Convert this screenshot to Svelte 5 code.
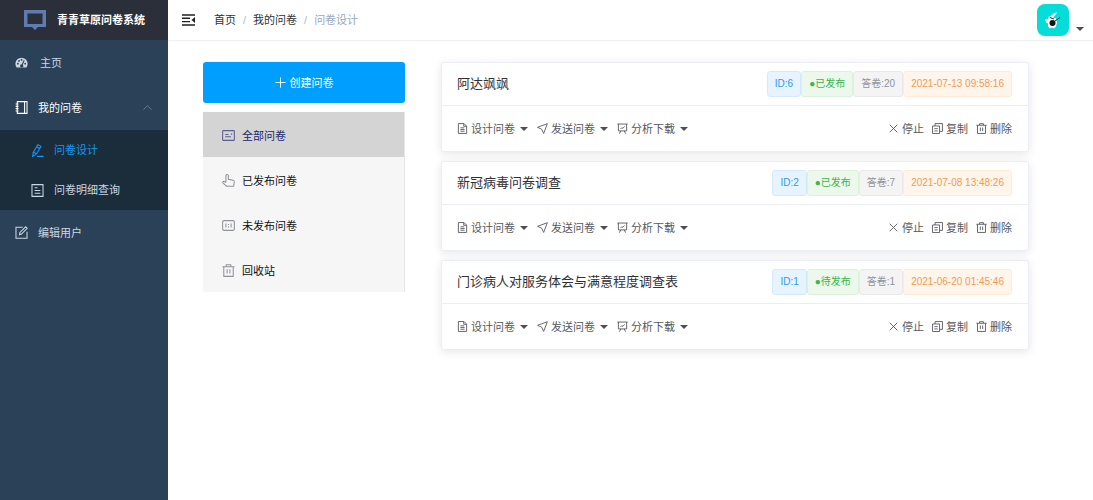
<script>
  let active = $state('all');
  let opened = $state(true);

  const filters = [
    { id: 'all', icon: 'card', label: '全部问卷' },
    { id: 'published', icon: 'pointer', label: '已发布问卷' },
    { id: 'draft', icon: 'ratio', label: '未发布问卷' },
    { id: 'trash', icon: 'trash', label: '回收站' }
  ];

  const surveys = [
    { id: 6, title: '阿达飒飒', status: '已发布', answers: 20, date: '2021-07-13 09:58:16' },
    { id: 2, title: '新冠病毒问卷调查', status: '已发布', answers: 7, date: '2021-07-08 13:48:26' },
    { id: 1, title: '门诊病人对服务体会与满意程度调查表', status: '待发布', answers: 1, date: '2021-06-20 01:45:46' }
  ];

  const menus = [
    { icon: 'document', label: '设计问卷' },
    { icon: 'send', label: '发送问卷' },
    { icon: 'board', label: '分析下载' }
  ];

  const actions = [
    { icon: 'close', label: '停止' },
    { icon: 'copy', label: '复制' },
    { icon: 'trash', label: '删除' }
  ];

  // stroked outlines on a 16x16 grid
  const icons = {
    notebook: 'M2.8 .8h12v14.400h-12zM11.800 .8v14.400M.8 3.800h3.500M.8 6.600h3.500M.8 9.400h3.500M.8 12.200h3.500',
    edit: 'M8.500 .8l3.800 2.100-5.600 9.300-4.700 3 .8-5.200zM7 3.300l3.700 2.200M2.900 9.700l3.800 2.400M7.500 15.200h8',
    list: 'M1.200 .8h13.600v14.400H1.200zM4.500 4.500h3.500M4.500 8h7M4.500 11.500h7',
    square: 'M9.500 1.500H1.200v13.500h13.600V7M5.500 10.800l.6-2.800 7-7 1.900 1.900-7 7z',
    card: 'M1.500 2h13q.7 0 .7.7v10.600q0 .7-.7.700h-13q-.7 0-.7-.7V2.700q0-.7.7-.7M4 6.800h4M4 9.600h7M11 6.300h1.500',
    pointer: 'M4.800 10V2.200a1.500 1.500 0 0 1 3 0V6.600l5.800 1.200q1.700.4 1.500 2l-.8 5.200H5.600L1 10.800q-.4-1.700 1.400-1.700l2.400 1.500',
    ratio: 'M2.500 2h11q1.700 0 1.700 1.500v9q0 1.500-1.700 1.500h-11Q.8 14 .8 12.500v-9Q.8 2 2.500 2zM4.800 5.500v5M11.200 5.500v5M8 6v1.500M8 9v1.500',
    trash: 'M.5 3.300h15M5.200 3.300v-2.300h5.600v2.300M2.200 3.300v11.900h11.600v-11.900M6.300 6.500v5.300M9.700 6.500v5.300',
    document: 'M2 .8h8.300l3.700 3.700V15.200H2zM9.800 1v3.800h4M5 7h5.500M5 9.500h6M5 12h6',
    send: 'M.8 6.300l14.200-5.300-5.300 14.200-2.900-6.200z',
    board: 'M.5 1.500h15M2 1.500v10h12v-10M5.500 11.500l-2 4M10.500 11.500l2 4M5 8.800l2-2 1.500 1L11 5',
    close: 'M2.500 2.500l11 11M13.500 2.500l-11 11',
    copy: 'M.8 4.300h10.200v11H.8zM4.500 4.300v-3.500h10.700v11.400H11M3.500 8.200h4.800M3.500 11.500h4.800',
    plus: 'M8 .5v15M.5 8h15',
    up: 'M.8 12L8 4.800l7.200 7.200'
  };
</script>

{#snippet icon(name)}
  <svg class="icon" viewBox="0 0 16 16" aria-hidden="true"><path d={icons[name]} /></svg>
{/snippet}

<div class="app">
  <aside>
    <div class="logo">
      <svg viewBox="0 0 22 20" aria-hidden="true">
        <path d="M0 0h22v17h-8l-3 3-3-3H0z" fill="#5f7bb0" />
        <path d="M3.500 3.500h15v10.500h-15z" fill="#2b2f3a" />
      </svg>
      <h1>青青草原问卷系统</h1>
    </div>
    <nav>
      <a class="item home" href="#home">
        <svg class="gauge" viewBox="0 0 16 16" aria-hidden="true">
          <path d="M2 14a7.500 7.500 0 1 1 12 0z" fill="currentColor" />
          <g fill="#2b4158">
            <circle cx="3.500" cy="9.500" r="1.100" />
            <circle cx="4.900" cy="6" r="1.100" />
            <circle cx="8" cy="4.600" r="1.100" />
            <circle cx="12.500" cy="9.500" r="1.100" />
            <path d="M10.700 5l1.200.5-2.300 5.200a2 2 0 1 1-1.200-.5z" />
          </g>
        </svg>
        主页
      </a>
      <button class="item current" aria-expanded={opened} onclick={() => (opened = !opened)}>
        {@render icon('notebook')}
        我的问卷
        <span class="arrow" class:closed={!opened}>{@render icon('up')}</span>
      </button>
      {#if opened}
        <div class="submenu">
          <a class="active" href="#design">{@render icon('edit')}问卷设计</a>
          <a href="#detail">{@render icon('list')}问卷明细查询</a>
        </div>
      {/if}
      <a class="item" href="#user">{@render icon('square')}编辑用户</a>
    </nav>
  </aside>

  <div class="page">
    <header>
      <button class="fold" aria-label="菜单">
        <svg viewBox="0 0 14 12" aria-hidden="true">
          <path d="M0 1h13M0 4.300h8M0 7.600h8M0 11h13" stroke="#222" stroke-width="1.400" />
          <path d="M13 3v6L9.500 6z" fill="#222" />
        </svg>
      </button>
      <div class="crumbs">
        <a href="#home">首页</a><i>/</i><a href="#mine">我的问卷</a><i>/</i><span>问卷设计</span>
      </div>
      <button class="user" aria-label="用户">
        <svg class="avatar" viewBox="0 0 32 32" aria-hidden="true">
          <rect width="32" height="32" rx="8" fill="#06dcd8" />
          <path d="M11 13l3-1 3-3 3-.5-2 3-2 2 3 1 1 4-1 4-2 2-2-1-2 1-2-2v-3l-2-1-1-3 3-.5z" fill="#fff" />
          <path d="M13 13.500l4 1.500M18 17l5-3.500" stroke="#143b40" />
          <circle cx="15.500" cy="19" r="3" fill="#101414" />
        </svg>
        <span class="caret"></span>
      </button>
    </header>

    <main>
      <section>
        <button class="create">{@render icon('plus')}创建问卷</button>
        <div class="filters">
          {#each filters as f}
            <button class:active={active === f.id} onclick={() => (active = f.id)}>
              {@render icon(f.icon)}{f.label}
            </button>
          {/each}
        </div>
      </section>

      <section class="cards">
        {#each surveys as survey (survey.id)}
          <article>
            <div class="top">
              <h2>{survey.title}</h2>
              <div class="tags">
                <span class="tag">ID:{survey.id}</span>
                <span class="tag success">●{survey.status}</span>
                <span class="tag info">答卷:{survey.answers}</span>
                <span class="tag warning">{survey.date}</span>
              </div>
            </div>
            <div class="bottom">
              {#each menus as menu}
                <button>{@render icon(menu.icon)}{menu.label}<span class="caret"></span></button>
              {/each}
              <div class="actions">
                {#each actions as action}
                  <button>{@render icon(action.icon)}{action.label}</button>
                {/each}
              </div>
            </div>
          </article>
        {/each}
      </section>
    </main>
  </div>
</div>

<style>
  :global(body) {
    background: #fff;
  }

  .app {
    display: flex;
    min-height: 100vh;
    font: 11px/16px "Liberation Sans", "Noto Sans CJK SC", sans-serif;
    color: #303133;
  }

  button {
    border: 0;
    padding: 0;
    background: none;
    font: inherit;
    color: inherit;
    cursor: pointer;
  }
  a {
    color: inherit;
    text-decoration: none;
  }
  h1, h2 {
    margin: 0;
  }

  .icon {
    width: 11px;
    height: 11px;
    flex: none;
    fill: none;
    stroke: currentColor;
    stroke-width: 1.3;
  }
  .caret {
    border: 4px solid transparent;
    border-top-color: #4c4e52;
    border-bottom: 0;
  }

  aside {
    width: 168px;
    flex: none;
    background: #2b4158;
    color: #cbd7e3;
  }
  .logo {
    display: flex;
    align-items: center;
    gap: 11px;
    height: 40px;
    padding-left: 24px;
    background: #2b2f3a;
  }
  .logo svg {
    width: 22px;
    height: 20px;
  }
  .logo h1 {
    font-size: 11px;
    font-weight: bold;
    color: #fff;
  }

  .item {
    display: flex;
    align-items: center;
    gap: 10px;
    box-sizing: border-box;
    width: 100%;
    height: 45px;
    padding: 0 16px 0 15px;
  }
  .item > .icon, .gauge {
    width: 13px;
    height: 13px;
  }
  .home {
    gap: 12px;
  }
  .current {
    color: #fff;
  }
  .arrow {
    display: flex;
    margin-left: auto;
    color: #8191a1;
  }
  .arrow .icon {
    width: 9px;
    height: 9px;
  }
  .closed {
    transform: rotate(180deg);
  }
  .submenu {
    background: #1b2c3b;
  }
  .submenu a {
    display: flex;
    align-items: center;
    gap: 10px;
    height: 40px;
    padding-left: 31px;
  }
  .submenu .icon {
    width: 13px;
    height: 13px;
  }
  .submenu .active {
    color: #1598f5;
  }

  .page {
    flex: 1;
    min-width: 0;
  }
  header {
    display: flex;
    align-items: center;
    height: 40px;
    padding: 0 9px 0 14px;
    border-bottom: 1px solid #eff0f2;
  }
  .fold svg {
    display: block;
    width: 14px;
    height: 12px;
  }
  .crumbs {
    margin-left: 18px;
    color: #97a8be;
  }
  .crumbs a {
    color: #303133;
  }
  .crumbs i {
    margin: 0 7px;
    font-style: normal;
    color: #b4b9c2;
  }
  .user {
    display: flex;
    align-items: flex-end;
    gap: 7px;
    margin-left: auto;
  }
  .user .caret {
    margin-bottom: 5px;
  }
  .avatar {
    width: 32px;
    height: 32px;
  }

  main {
    display: grid;
    grid-template-columns: 202fr 588fr;
    gap: 36px;
    align-items: start;
    padding: 21px 64px 21px 35px;
  }
  .create {
    display: flex;
    align-items: center;
    justify-content: center;
    gap: 4px;
    width: 100%;
    height: 41px;
    border-radius: 3px;
    background: #009fff;
    color: #fff;
  }
  .filters {
    margin-top: 9px;
    border-right: 1px solid #e6e6e6;
    background: #f6f6f6;
  }
  .filters button {
    display: flex;
    align-items: center;
    gap: 7px;
    box-sizing: border-box;
    width: 100%;
    height: 45px;
    padding: 2px 0 0 19px;
    color: #111;
  }
  .filters .icon {
    width: 13px;
    height: 13px;
    color: #909399;
  }
  .filters .active {
    background: #d4d4d4;
    color: #20266f;
  }
  .filters .active .icon {
    color: #5a5f8c;
  }

  .cards {
    display: grid;
    gap: 9px;
  }
  article {
    border: 1px solid #ebeef5;
    border-radius: 3px;
    background: #fff;
    box-shadow: 0 2px 10px rgba(0, 0, 0, .1);
  }
  .top {
    display: flex;
    align-items: center;
    justify-content: space-between;
    height: 42px;
    padding: 0 16px 0 15px;
    border-bottom: 1px solid #ebeef5;
  }
  h2 {
    font-size: 13px;
    font-weight: normal;
  }
  .tags {
    display: flex;
  }
  .tag {
    padding: 0 7px;
    border: 1px solid #d3eafd;
    border-radius: 3px;
    background: #e7f4ff;
    font-size: 10px;
    line-height: 24px;
    color: #3397ea;
  }
  .success {
    border-color: #dbf2da;
    background: #ecf8eb;
    color: #3cb54a;
  }
  .info {
    border-color: #e9e9eb;
    background: #f4f4f5;
    color: #909399;
  }
  .warning {
    border-color: #fdebd6;
    background: #fff5ea;
    color: #ef9b55;
  }
  .bottom {
    display: flex;
    align-items: center;
    gap: 9px;
    height: 45px;
    padding: 0 16px 0 15px;
    color: #55585e;
  }
  .bottom button {
    display: flex;
    align-items: center;
    gap: 3px;
  }
  .bottom .caret {
    margin-left: 2px;
  }
  .actions {
    display: flex;
    gap: 8px;
    margin-left: auto;
  }
</style>
